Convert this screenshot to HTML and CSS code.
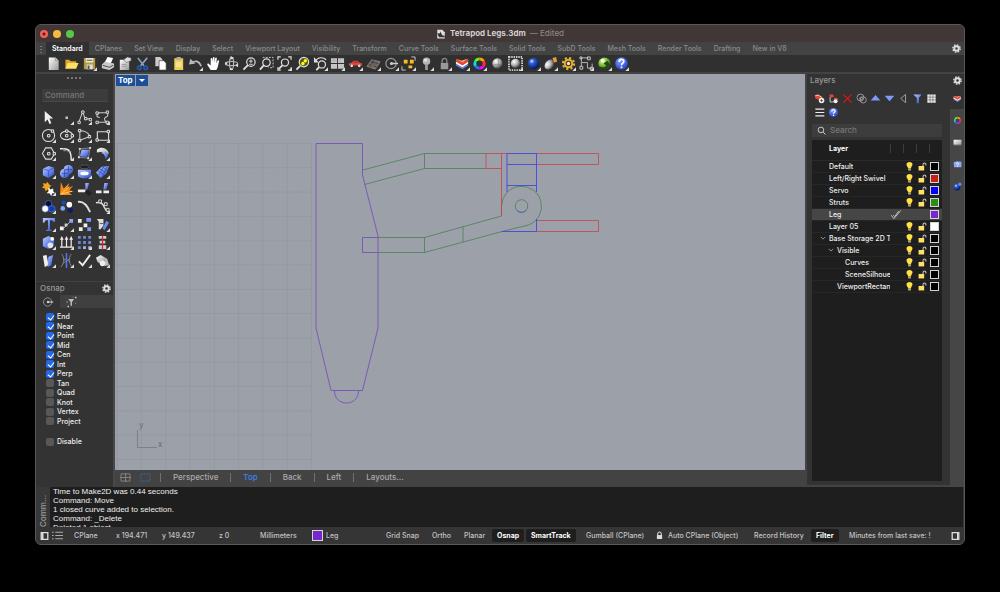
FILE: index.html
```html
<!DOCTYPE html>
<html lang="en">
<head>
<meta charset="utf-8">
<title>Tetrapod Legs.3dm</title>
<link rel="stylesheet" href="styles.css">
</head>
<body>
<svg class="sprite" aria-hidden="true">
  <defs>
    <linearGradient id="gBlue" x1="0" y1="0" x2="1" y2="1"><stop offset="0" stop-color="#c3d0ff"/><stop offset=".5" stop-color="#6d8bf0"/><stop offset="1" stop-color="#2c48b4"/></linearGradient>
    <linearGradient id="gGray" x1="0" y1="0" x2="1" y2="1"><stop offset="0" stop-color="#fff"/><stop offset="1" stop-color="#999"/></linearGradient>
    <radialGradient id="gNavy" cx=".35" cy=".3" r=".7"><stop offset="0" stop-color="#dfe9ff"/><stop offset=".3" stop-color="#2f62d8"/><stop offset="1" stop-color="#031a63"/></radialGradient>
    <radialGradient id="gPearl" cx=".35" cy=".3" r=".75"><stop offset="0" stop-color="#fff"/><stop offset=".5" stop-color="#b5b5b5"/><stop offset="1" stop-color="#333"/></radialGradient>
    <radialGradient id="gGreen" cx=".35" cy=".3" r=".75"><stop offset="0" stop-color="#d8ff9a"/><stop offset=".5" stop-color="#78bd33"/><stop offset="1" stop-color="#224d0c"/></radialGradient>
    <radialGradient id="gHelp" cx=".4" cy=".3" r=".75"><stop offset="0" stop-color="#86a3ff"/><stop offset="1" stop-color="#1f3cc0"/></radialGradient>
  </defs>
  <symbol id="more" viewBox="0 0 16 16"><path d="M16 12v4h-4z" fill="#ddd"/></symbol>
  <symbol id="new" viewBox="0 0 16 16"><path d="M3 1.500h7l3.500 3.500v10H3z" fill="url(#gGray)"/><path d="M10 1.500V5h3.500" fill="#ccc" stroke="#888" stroke-width=".7"/></symbol>
  <symbol id="open" viewBox="0 0 16 16"><path d="M1.500 13.500V4h4l1.500 1.500h6V8" fill="#e0a92c"/><path d="M1.500 13.500 4 7.500h11.500L13 13.500z" fill="#ffe067"/></symbol>
  <symbol id="save" viewBox="0 0 16 16"><path d="M2 2h12v12H2z" fill="#b39b3a"/><path d="M4 2h8v5H4z" fill="#e8e8e0"/><path d="M5 9h6.500v5H5z" fill="#ddd"/><path d="M6 10h2v4H6zM5 4h6v1H5z" fill="#555"/></symbol>
  <symbol id="print" viewBox="0 0 16 16"><path d="m5 7 3-6 6 1-2.500 6z" fill="#fff"/><path d="m2 9 3-3 10 2v4l-5 3-8-2z" fill="#c9c9c9"/><path d="m3 10 7 2 4-2" stroke="#444" fill="none"/></symbol>
  <symbol id="props" viewBox="0 0 16 16"><path d="M3 4h10v11H3z" fill="url(#gGray)"/><path d="m7 4 4-3 4 1v3l-5 2z" fill="#ddd" stroke="#555" stroke-width=".6"/><path d="M5 9h5M5 11h5" stroke="#999"/></symbol>
  <symbol id="cut" viewBox="0 0 16 16"><path d="m3 2 6.500 8.500M13 2 6 10.500" stroke="#8ba4c4" stroke-width="1.700"/><g fill="none" stroke="#2459b8" stroke-width="1.700"><circle cx="4.500" cy="12.500" r="1.900"/><circle cx="11.500" cy="12.500" r="1.900"/></g></symbol>
  <symbol id="copy" viewBox="0 0 16 16"><path d="M2.500 1h5L10 3.500V11H2.500z" fill="#ccc"/><path d="M6.500 5h5L14 7.500V15H6.500z" fill="#fff" stroke="#444" stroke-width=".7"/></symbol>
  <symbol id="paste" viewBox="0 0 16 16"><path d="M3.500 2.500h9.500V15H3.500z" fill="#eecb50"/><path d="M6 1h4.500v3H6z" fill="#aaa"/><path d="M5 6h6.500v6H5z" fill="#f8e18b"/></symbol>
  <symbol id="undo" viewBox="0 0 16 16"><path d="M4 8c3-4 8-3 10 3" fill="none" stroke="#bbb" stroke-width="1.700"/><path d="m1 9 1.500-6L8 8z" fill="#bbb"/></symbol>
  <symbol id="hand" viewBox="0 0 16 16"><path d="M5 15 1.500 9.500c-.6-1.300.9-2 1.700-1L5 10V3c0-1.300 1.700-1.300 1.800 0V7l.5-5c.2-1.300 1.800-1.200 1.800 0v5l.7-4.500c.2-1.200 1.800-1 1.700.3L11 8l1.300-3c.5-1 1.900-.5 1.600.6L12.500 12 11 15z" fill="#fff"/></symbol>
  <symbol id="rotate" viewBox="0 0 16 16"><g fill="none" stroke="#bbb" stroke-width="1.200"><ellipse cx="8" cy="8" rx="6.500" ry="2.200"/><ellipse cx="8" cy="8" rx="2.200" ry="6.500"/></g><path d="m7 0 4 2-4 2zM1 7h3l-2 3zM12 10l3-2v4zM7 12l3 3-4 0z" fill="#ddd"/></symbol>
  <symbol id="zoom" viewBox="0 0 16 16"><g fill="none" stroke="#ddd" stroke-width="1.300"><circle cx="9.500" cy="6.500" r="4.500"/><path d="M6.300 9.700 1.500 14.500" stroke-width="2"/><path d="M7.500 5.500h4M9.500 3.500v4M7.500 8.800h4" stroke-width="1"/></g></symbol>
  <symbol id="zoomwin" viewBox="0 0 16 16"><path d="M4 1.500h11v11h-5" fill="none" stroke="#ccc" stroke-dasharray="2 1.300"/><g fill="none" stroke="#ddd" stroke-width="1.300"><circle cx="8" cy="7" r="4"/><path d="m5 10-4 4.500" stroke-width="2"/></g></symbol>
  <symbol id="zoomext" viewBox="0 0 16 16"><path d="M1 4V1h3M12 1h3v3M15 12v3h-3M4 15H1v-3" fill="none" stroke="#ddd" stroke-width="1.300"/><g fill="none" stroke="#ddd" stroke-width="1.300"><circle cx="8.500" cy="7" r="3.800"/><path d="m5.700 10-4 4" stroke-width="2"/></g></symbol>
  <symbol id="zoomsel" viewBox="0 0 16 16"><circle cx="9.500" cy="6.500" r="5" fill="#5b571e" stroke="#ddd" stroke-width="1.300"/><circle cx="11" cy="5" r="1.800" fill="#ff0"/><circle cx="8.500" cy="8" r="1.800" fill="#ff0"/><path d="m5.500 10.500-4 4" stroke="#ddd" stroke-width="2"/></symbol>
  <symbol id="zoomback" viewBox="0 0 16 16"><g fill="none" stroke="#ddd" stroke-width="1.300"><circle cx="9.500" cy="9" r="3.800"/><path d="m6.500 12-3 3" stroke-width="2"/><path d="M3 5c2-4 8-4 11-1"/></g><path d="M1 1v6h5z" fill="#ddd"/></symbol>
  <symbol id="views" viewBox="0 0 16 16"><path d="M1 2.500h6.500v5H1zM8.500 2.500H15v5H8.500zM1 8.500h6.500v5H1zM8.500 8.500H15v5H8.500z" fill="#c5c5c5"/><path d="M4 3v4M1 5h6M11 3v4" stroke="#999" stroke-width=".5"/></symbol>
  <symbol id="car" viewBox="0 0 16 16"><path d="M1 8 4 7l2-2h4l2 2 3 1v2H1z" fill="#e0443a"/><path d="m6 7 1-1h2.500l1 1z" fill="#652e2e"/><circle cx="4" cy="10.500" r="1.400" fill="#ddd"/><circle cx="12" cy="10.500" r="1.400" fill="#ddd"/></symbol>
  <symbol id="cplane" viewBox="0 0 16 16"><path d="m1 11 5-7 9 2-5 8z" fill="#666" stroke="#999" stroke-width=".7"/><path d="m3 9 9 3M5 6l8 2M8 4 5 12" stroke="#333" stroke-width=".7"/><path d="m6 10 4-2" stroke="#d33" stroke-width="1.300"/><path d="m6 10 2 1" stroke="#4b4"/></symbol>
  <symbol id="osnap" viewBox="0 0 16 16"><circle cx="7.500" cy="8" r="5.500" fill="none" stroke="#999" stroke-width="1.200"/><circle cx="8" cy="8" r="1.700" fill="#ccc"/><path d="M8 8h7" stroke="#ccc" stroke-width="1.500"/></symbol>
  <symbol id="select" viewBox="0 0 16 16"><path d="M3 4h4v4H3zM9.500 4h4v4h-4zM8 10h4v3H8z" fill="#ffbd21"/><path d="M1 11v4h4M11 1h4v4" fill="none" stroke="#ccc"/></symbol>
  <symbol id="lamp" viewBox="0 0 16 16"><circle cx="8" cy="5.500" r="4" fill="#b5b5b5"/><circle cx="7" cy="4.500" r="1.500" fill="#e5e5e5"/><path d="M6.500 9h3v6h-3z" fill="#999"/></symbol>
  <symbol id="lock" viewBox="0 0 16 16"><path d="M5.500 8V5a2.500 2.500 0 0 1 5 0v3" fill="none" stroke="#888" stroke-width="1.400"/><path d="M4 7.500h8V14H4z" fill="#999"/></symbol>
  <symbol id="layers" viewBox="0 0 16 16"><path d="m1 7 7 4 6-4v3l-6 4-7-4z" fill="#567fe0"/><path d="m1 5 7 4 6-5v4l-6 4-7-4z" fill="#fff"/><path d="m1 3 6 2 7-2v3l-6 4-7-4z" fill="#e0492d"/><path d="m2 3 5 2 6-2-5 4z" fill="#ffa082"/></symbol>
  <symbol id="wheel" viewBox="0 0 16 16"><g fill="none" stroke-width="3"><path d="M8 3a5 5 0 0 1 4.300 2.500" stroke="#ff9e00"/><path d="M12.300 5.500a5 5 0 0 1 0 5" stroke="#ff3434"/><path d="M12.300 10.500A5 5 0 0 1 8 13" stroke="#f0f"/><path d="M8 13a5 5 0 0 1-4.300-2.500" stroke="#3568ff"/><path d="M3.700 10.500a5 5 0 0 1 0-5" stroke="#00dfeb"/><path d="M3.700 5.500A5 5 0 0 1 8 3" stroke="#7bea13"/></g></symbol>
  <symbol id="pearl" viewBox="0 0 16 16"><circle cx="8" cy="8" r="5.500" fill="url(#gPearl)"/><path d="M9 3v10M4 9h9" stroke="#777" stroke-width=".6"/></symbol>
  <symbol id="render" viewBox="0 0 16 16"><path d="M1 1h14v14H1z" fill="none" stroke="#ccc" stroke-width="2" stroke-dasharray="1.500 1"/><circle cx="8" cy="8" r="5" fill="url(#gPearl)"/></symbol>
  <symbol id="ball" viewBox="0 0 16 16"><circle cx="8" cy="8" r="6" fill="url(#gNavy)"/></symbol>
  <symbol id="spot" viewBox="0 0 16 16"><ellipse cx="7" cy="9" rx="6" ry="4.500" transform="rotate(-45 7 9)" fill="url(#gPearl)"/><path d="m10 2 4-1 1 5-3 1z" fill="#f09a32"/></symbol>
  <symbol id="options" viewBox="0 0 16 16"><g fill="none" stroke="#e4ad35"><circle cx="8" cy="8" r="4" stroke-width="2.200"/><circle cx="8" cy="8" r="6" stroke-width="2.200" stroke-dasharray="2.300 2.400"/></g><circle cx="8" cy="8" r="1.800" fill="#ffebae"/></symbol>
  <symbol id="dims" viewBox="0 0 16 16"><path d="M2.500 11V2H10M3 7h6v6h5V8" fill="none" stroke="#bbb"/><path d="M1 11h3v3H1zM9 1h3v3H9zM12 12h3v3h-3zM1 1h2v2H1z" fill="none" stroke="#ccc"/></symbol>
  <symbol id="hopper" viewBox="0 0 16 16"><circle cx="8" cy="8" r="6.500" fill="url(#gGreen)"/><path d="M2 11c4 2 7 1 8-1L7 8l4-3 3 4c-1 5-8 8-12 2" fill="#29451b"/><circle cx="6" cy="5" r="2" fill="#f3ffd9"/></symbol>
  <symbol id="help" viewBox="0 0 16 16"><circle cx="8" cy="8" r="6.700" fill="url(#gHelp)"/><path d="M5.500 6.500c0-4 5-3.300 5-.7 0 2-2.500 1.700-2.500 4M8 11.200v1.800" fill="none" stroke="#fff" stroke-width="1.800"/></symbol>
  <symbol id="gear" viewBox="0 0 16 16"><circle cx="8" cy="8" r="4" fill="none" stroke="#ddd" stroke-width="3.400"/><circle cx="8" cy="8" r="6.500" fill="none" stroke="#ddd" stroke-width="2.600" stroke-dasharray="2.700 2.400"/></symbol>
  <symbol id="arrow" viewBox="0 0 16 16"><path d="M4 1v12l3-3 2 5 2-1-2-5h4z" fill="#eee"/></symbol>
  <symbol id="point" viewBox="0 0 16 16"><path d="M7 7h2.500v2.500H7z" fill="#ccc"/></symbol>
  <symbol id="pline" viewBox="0 0 16 16"><path d="m2 13 4-11 3 8 5-1" fill="none" stroke="#ccc" stroke-width="1.100"/><g fill="#333" stroke="#ddd"><path d="M1 12h2.500v2.500H1zM5 1h2.500v2.500H5zM8 8h2.500v2.500H8zM13 9h2.500v2.500H13z"/></g></symbol>
  <symbol id="curve" viewBox="0 0 16 16"><path d="M3 3h10c2 3 0 4-2 5s0 5 2 5H3M5 3c-4 2-4 5 0 5" fill="none" stroke="#ccc" stroke-width="1.100"/><g fill="#333" stroke="#ddd"><path d="M1 2h2.500v2.500H1zM12 1h2.500v2.500H12zM1 12h2.500v2.500H1zM12 12h2.500v2.500H12z"/></g></symbol>
  <symbol id="circle" viewBox="0 0 16 16"><circle cx="8" cy="8" r="6.500" fill="none" stroke="#ddd" stroke-width="1.100"/><path d="M7 7h2.500v2.500H7zM11 2h2.500v2.500H11z" fill="#333" stroke="#eee"/></symbol>
  <symbol id="ellipse" viewBox="0 0 16 16"><ellipse cx="8" cy="8" rx="6.500" ry="4.500" fill="none" stroke="#ddd" stroke-width="1.100"/><path d="M7 7h2.500v2.500H7zM7 2h2.500v2.500H7zM13 7h2.500v2.500H13z" fill="#333" stroke="#eee"/></symbol>
  <symbol id="arc" viewBox="0 0 16 16"><path d="M3 13V3c5 0 9 2 11 6L3 13" fill="none" stroke="#ccc" stroke-width="1.100"/><path d="M1.500 1.500H4V4H1.500zM1.500 12H4v2.500H1.500zM12 8h2.500v2.500H12z" fill="#333" stroke="#eee"/></symbol>
  <symbol id="rect" viewBox="0 0 16 16"><path d="M2.500 4h12v9h-12z" fill="none" stroke="#ddd" stroke-width="1.200"/><path d="M1 11.500h2.500V14H1zM13 2.500h2.500V5H13z" fill="#333" stroke="#eee"/></symbol>
  <symbol id="poly" viewBox="0 0 16 16"><path d="M5 2h6l3.500 6-3.500 6H5L1.500 8z" fill="none" stroke="#ddd" stroke-width="1.100"/><path d="M7 7h2.500v2.500H7zM13 7h2.500v2.500H13z" fill="#333" stroke="#eee"/></symbol>
  <symbol id="fillet" viewBox="0 0 16 16"><path d="M1 3h4c6 0 8 3 8 12" fill="none" stroke="#eee" stroke-width="1.500"/><path d="M5 2v3h3M9 6h4" fill="none" stroke="#999"/></symbol>
  <symbol id="patch" viewBox="0 0 16 16"><path d="m5 4 8 0-2 8-8-1z" fill="url(#gBlue)"/><path d="m3 3 11-1-2 11-10-1z" fill="none" stroke="#aaa" stroke-width=".7"/><path d="M2 2h2v2H2zM13 1h2v2h-2zM11 12h2v2h-2zM1 11h2v2H1z" fill="#ddd"/></symbol>
  <symbol id="loft" viewBox="0 0 16 16"><path d="M2 4c5-4 11-2 13 4l-5 2C9 6 6 6 2 7z" fill="url(#gGray)"/><path d="M7 8c3 0 4 2 4 6l3-3c0-4-2-5-4-5z" fill="url(#gBlue)"/></symbol>
  <symbol id="box" viewBox="0 0 16 16"><path d="m2 5 6-3 6 2v7l-6 4-6-3z" fill="url(#gBlue)"/><path d="m2 5 6 2 6-3M8 7v8" fill="none" stroke="#3c53b7" stroke-width=".8"/></symbol>
  <symbol id="spheres" viewBox="0 0 16 16"><circle cx="10" cy="6" r="5" fill="url(#gBlue)"/><circle cx="6" cy="10" r="5" fill="url(#gBlue)"/><path d="M3 10h7M6 6v8M10 2v7M6 6h8" stroke="#263c91" stroke-width=".7"/></symbol>
  <symbol id="tube" viewBox="0 0 16 16"><ellipse cx="8" cy="3" rx="5" ry="2" fill="#1d1d1d" stroke="#555"/><path d="M1 6h14v7c-3 3-11 3-14 0z" fill="url(#gBlue)"/><ellipse cx="8" cy="10" rx="4.500" ry="2" fill="#fff"/></symbol>
  <symbol id="mesh" viewBox="0 0 16 16"><path d="m1 9 6-6 8-1-3 8-6 5z" fill="url(#gBlue)"/><path d="m3 7 6 4M5 5l6 4M8 3l5 4M4 12l5-9M8 13l5-10" stroke="#314bae" stroke-width=".8"/></symbol>
  <symbol id="puzzle" viewBox="0 0 16 16"><path d="m2 2 3 1 2-2 2 3 2 1-2 2 1 3-3-1-2 2-1-3-3-1 2-2z" fill="#f4a11e"/><path d="m8 7 2 2 3-1 0 3 2 2-3 0-1 3-2-3-3 0 2-2z" fill="#fff"/></symbol>
  <symbol id="explode" viewBox="0 0 16 16"><path d="M1 15 2 1l3 7 6-6-2 6 6-3-4 5 5 1-6 1 4 3z" fill="#f58a18"/><path d="m2 14 9-8M2 14l12-3" stroke="#ffd35c"/></symbol>
  <symbol id="trim" viewBox="0 0 16 16"><path d="M9 2h4l-2 7H9z" fill="url(#gBlue)"/><path d="M1 9h8v3H1z" fill="#eee"/><path d="m8 12 4-3 4 4-3 3z" fill="#222"/></symbol>
  <symbol id="split" viewBox="0 0 16 16"><path d="M10 2h4l-2 7H9z" fill="url(#gBlue)"/><path d="M1 10h6v3H1zM9 10h6v3H9z" fill="#eee"/></symbol>
  <symbol id="union" viewBox="0 0 16 16"><g stroke="#5878e0" stroke-width=".7"><circle cx="8" cy="5" r="3.500" fill="#061035"/><circle cx="4.500" cy="10.500" r="3.500" fill="#fff"/><circle cx="11.500" cy="10.500" r="3.500" fill="#123cab"/></g></symbol>
  <symbol id="dots" viewBox="0 0 16 16"><circle cx="5" cy="4" r="2.300" fill="#1b48b5"/><circle cx="11" cy="6" r="3" fill="#fff"/><circle cx="4" cy="10" r="2.500" fill="#86a5ff"/><circle cx="12" cy="12" r="2.800" fill="#101c65"/></symbol>
  <symbol id="blend" viewBox="0 0 16 16"><path d="M1 3c6-1 10 4 13 11" fill="none" stroke="#ddd" stroke-width="2"/></symbol>
  <symbol id="match" viewBox="0 0 16 16"><path d="M1 4c6-1 8 2 9 5s3 4 5 5" fill="none" stroke="#ddd" stroke-width="1.600"/><path d="M4 1h3v3H4zM10 4h3v3h-3zM12 10h3v3h-3z" fill="#333" stroke="#ddd"/></symbol>
  <symbol id="text" viewBox="0 0 16 16"><path d="M2 1h13v4h-2l-1-1.500H9.500V13l2 1v1h-6v-1l2-1V3.500H5L3.500 6H2z" fill="url(#gBlue)"/></symbol>
  <symbol id="move" viewBox="0 0 16 16"><path d="m4 13 8-8" stroke="#bbb"/><path d="M1 10h4v4H1z" fill="#eee"/><path d="M6 7h3v3H6z" fill="#ccc"/><path d="M11 2h4v4h-4z" fill="#88a5fa"/></symbol>
  <symbol id="copies" viewBox="0 0 16 16"><path d="M1 2h4v4H1zM7 7h4v4H7zM2 11h4v4H2z" fill="#eee"/><path d="M10 1h5v4h-5zM11 11h4v4h-4z" fill="#7898f4"/></symbol>
  <symbol id="scale" viewBox="0 0 16 16"><path d="M2 2h7v7l-3 4H4V5z" fill="#ddd"/><path d="m8 12 4-8 3 2-5 8z" fill="#6988f0"/><path d="M5 7h4" stroke="#555"/></symbol>
  <symbol id="cage" viewBox="0 0 16 16"><path d="m2 4 6-3 6 3v8l-6 3-6-3z" fill="url(#gBlue)"/><circle cx="12" cy="4" r="2" fill="#fff"/><circle cx="10" cy="11" r="3" fill="#e5e5e5"/></symbol>
  <symbol id="extrude" viewBox="0 0 16 16"><path d="M1 13h14M3 13V4M8 13V4M13 13V4" stroke="#eee" stroke-width="1.300"/><path d="m1 5 2-4 2 4zM6 5l2-4 2 4zM11 5l2-4 2 4z" fill="#eee"/></symbol>
  <symbol id="array" viewBox="0 0 16 16"><path d="M1 1h3v3H1zM6.500 1h3v3h-3zM12 1h3v3h-3zM1 6.500h3v3H1zM6.500 6.500h3v3h-3zM12 6.500h3v3h-3zM1 12h3v3H1z" fill="#6b86d8"/><path d="M6.500 12h3v3h-3zM12 12h3v3h-3z" fill="#aab8e8"/></symbol>
  <symbol id="align" viewBox="0 0 16 16"><path d="M4 1h8v3H4zM5 6h6v3H5zM4 11h8v4H4z" fill="#ccc"/><path d="M8 0v16" stroke="#d92323" stroke-width="1.300"/></symbol>
  <symbol id="plates" viewBox="0 0 16 16"><path d="m2 3 4-1 2 11-4 2z" fill="#eee"/><path d="m8 4 5-2-2 11-4 2z" fill="url(#gBlue)"/></symbol>
  <symbol id="section" viewBox="0 0 16 16"><path d="M3 1c3 5 3 9-1 14M13 1c-3 5-3 9 1 14M4 6l8 3M4 11l8-5" fill="none" stroke="#888"/><path d="M8 0v16" stroke="#4b77ff" stroke-width="1.600"/></symbol>
  <symbol id="check" viewBox="0 0 16 16"><path d="m2 9 4 4 8-11" fill="none" stroke="#eee" stroke-width="2"/></symbol>
  <symbol id="solids" viewBox="0 0 16 16"><path d="m1 5 5-3 5 3-2 6-6-1z" fill="url(#gGray)"/><path d="m10 5 3 1 2 7-5 1z" fill="#bbb"/><circle cx="8" cy="11" r="3" fill="#eee"/></symbol>
  <symbol id="newlayer" viewBox="0 0 16 16"><path d="m1 3 5-1 7 4-3 5-8-3z" fill="#e0492d"/><path d="m2 4 4-1 5 3" stroke="#fff" fill="none"/><circle cx="11" cy="11" r="4" fill="#eee"/><path d="M9 11h4M11 9v4" stroke="#333"/></symbol>
  <symbol id="sublayer" viewBox="0 0 16 16"><path d="M2 2h5l2 3-6 2zM9 7h4l2 3H9z" fill="#e0492d"/><path d="M3 6v7h5" fill="none" stroke="#fff"/><circle cx="11" cy="12" r="3" fill="#eee"/></symbol>
  <symbol id="delete" viewBox="0 0 16 16"><path d="m2 2 12 12M14 2 2 14" stroke="#dd1710" stroke-width="2"/></symbol>
  <symbol id="spiral" viewBox="0 0 16 16"><g fill="none" stroke="#aaa" stroke-width="1.200"><circle cx="6.500" cy="6.500" r="5"/><circle cx="10.500" cy="10" r="4.500"/><circle cx="7.500" cy="8" r="2"/></g></symbol>
  <symbol id="up" viewBox="0 0 16 16"><path d="m8 3 7 8H1z" fill="#7c9aff"/></symbol>
  <symbol id="down" viewBox="0 0 16 16"><path d="m8 12 7-8H1z" fill="#7c9aff"/></symbol>
  <symbol id="left" viewBox="0 0 16 16"><path d="M11 2v12L4 8z" fill="none" stroke="#aaa" stroke-width="1.300"/></symbol>
  <symbol id="filter" viewBox="0 0 16 16"><path d="M2 2h12l-4 5v8H7V7z" fill="url(#gBlue)"/></symbol>
  <symbol id="grid" viewBox="0 0 16 16"><path d="M2 2h12v12H2z" fill="#eee"/><path d="M6 2v12M10 2v12M2 6h12M2 10h12" stroke="#666"/></symbol>
  <symbol id="menu" viewBox="0 0 16 16"><path d="M2 3h13M2 8h13M2 13h13" stroke="#eee" stroke-width="1.700"/></symbol>
  <symbol id="magnify" viewBox="0 0 16 16"><circle cx="7" cy="7" r="5" fill="none" stroke="#ddd" stroke-width="1.500"/><path d="m11 11 4 4" stroke="#ddd" stroke-width="1.700"/></symbol>
  <symbol id="monitor" viewBox="0 0 16 16"><path d="M1 3h14v9H1z" fill="url(#gGray)"/><path d="M2 13h12" stroke="#777"/></symbol>
  <symbol id="book" viewBox="0 0 16 16"><path d="m1 4 6-2 8 1v10H2z" fill="#8ea7f5"/><path d="M6 7c0-3 4-2 4 0 0 1-2 1-2 3M8 11v1.500" fill="none" stroke="#fff" stroke-width="1.500"/></symbol>
  <symbol id="world" viewBox="0 0 16 16"><circle cx="7" cy="9" r="6" fill="url(#gNavy)"/><circle cx="12" cy="4" r="3" fill="#6188e5"/></symbol>
  <symbol id="bulb" viewBox="0 0 16 16"><path d="M8 0c7 0 6 7 3 9v2H5V9C2 7 1 0 8 0" fill="#ffe045"/><path d="M5.500 11h5v4h-5z" fill="#bbb06d"/></symbol>
  <symbol id="unlock" viewBox="0 0 16 16"><path d="M1 7h10v8H1z" fill="#ffe164"/><path d="M9 8V4c0-3 5-3 5 0v2" fill="none" stroke="#ccc" stroke-width="1.800"/></symbol>
  <symbol id="dbl" viewBox="0 0 16 16"><path d="m1 9 4 5L15 2M4 9l2 2 6-8" fill="none" stroke="#ccc" stroke-width="1.300"/></symbol>
  <symbol id="chev" viewBox="0 0 16 16"><path d="m2 5 6 6 6-6" fill="none" stroke="#999" stroke-width="2.500"/></symbol>
  <symbol id="doc" viewBox="0 0 16 16"><path d="M2 1h8l4 4v10H2z" fill="#ddd"/><path d="M2 7c3 1 5 0 5-3l3 6 4 1v2H5z" fill="#333"/></symbol>
  <symbol id="snaps" viewBox="0 0 16 16"><path d="M3 4h8L8 8v5H6V8z" fill="#bbb"/><path d="M12 1h2v2h-2zM1 7h1v2H1zM12 9h1v1h-1zM2 13h2v2H2zM9 1h1v1H9z" fill="#ccc"/></symbol>
</svg>

<main class="window">
  <header class="titlebar">
    <div class="lights"><button class="light close" aria-label="Close"></button><button class="light mini" aria-label="Minimize"></button><button class="light full" aria-label="Full screen"></button></div>
    <svg class="doc-icon"><use href="#doc"/></svg>
    <h1>Tetrapod Legs.3dm</h1><span class="edited">— Edited</span>
  </header>

  <nav class="tabs" aria-label="Toolbars">
    <span class="side-grip"></span>
    <button class="tab active">Standard</button><button class="tab">CPlanes</button><button class="tab">Set View</button><button class="tab">Display</button><button class="tab">Select</button><button class="tab">Viewport Layout</button><button class="tab">Visibility</button><button class="tab">Transform</button><button class="tab">Curve Tools</button><button class="tab">Surface Tools</button><button class="tab">Solid Tools</button><button class="tab">SubD Tools</button><button class="tab">Mesh Tools</button><button class="tab">Render Tools</button><button class="tab">Drafting</button><button class="tab">New in V8</button>
    <button class="gear" aria-label="Toolbar options"><svg><use href="#gear"/></svg></button>
  </nav>

  <div class="toolbar">
    <button aria-label="New"><svg><use href="#new"/></svg></button>
    <button aria-label="Open"><svg><use href="#open"/></svg></button>
    <button aria-label="Save"><svg><use href="#save"/><use href="#more"/></svg></button>
    <button aria-label="Print"><svg><use href="#print"/></svg></button>
    <button aria-label="Properties"><svg><use href="#props"/></svg></button>
    <button aria-label="Cut"><svg><use href="#cut"/></svg></button>
    <button aria-label="Copy"><svg><use href="#copy"/></svg></button>
    <button aria-label="Paste"><svg><use href="#paste"/></svg></button>
    <button aria-label="Undo"><svg><use href="#undo"/><use href="#more"/></svg></button>
    <button aria-label="Pan"><svg><use href="#hand"/></svg></button>
    <button aria-label="Rotate view"><svg><use href="#rotate"/></svg></button>
    <button aria-label="Zoom dynamic"><svg><use href="#zoom"/></svg></button>
    <button aria-label="Zoom window"><svg><use href="#zoomwin"/></svg></button>
    <button aria-label="Zoom extents"><svg><use href="#zoomext"/><use href="#more"/></svg></button>
    <button aria-label="Zoom selected"><svg><use href="#zoomsel"/></svg></button>
    <button aria-label="Undo view"><svg><use href="#zoomback"/><use href="#more"/></svg></button>
    <button aria-label="Viewports"><svg><use href="#views"/><use href="#more"/></svg></button>
    <button aria-label="Right view"><svg><use href="#car"/><use href="#more"/></svg></button>
    <button aria-label="Construction plane"><svg><use href="#cplane"/><use href="#more"/></svg></button>
    <button aria-label="Object snap"><svg><use href="#osnap"/><use href="#more"/></svg></button>
    <button aria-label="Select"><svg><use href="#select"/><use href="#more"/></svg></button>
    <button aria-label="Hide"><svg><use href="#lamp"/><use href="#more"/></svg></button>
    <button aria-label="Lock"><svg><use href="#lock"/><use href="#more"/></svg></button>
    <button aria-label="Layers"><svg><use href="#layers"/><use href="#more"/></svg></button>
    <button aria-label="Color"><svg><use href="#wheel"/><use href="#more"/></svg></button>
    <button aria-label="Shade"><svg><use href="#pearl"/></svg></button>
    <button aria-label="Render preview"><svg><use href="#render"/><use href="#more"/></svg></button>
    <button aria-label="Render"><svg><use href="#ball"/><use href="#more"/></svg></button>
    <button aria-label="Spotlight"><svg><use href="#spot"/><use href="#more"/></svg></button>
    <button aria-label="Options"><svg><use href="#options"/><use href="#more"/></svg></button>
    <button aria-label="Dimension"><svg><use href="#dims"/><use href="#more"/></svg></button>
    <button aria-label="Grasshopper"><svg><use href="#hopper"/><use href="#more"/></svg></button>
    <button aria-label="Help"><svg><use href="#help"/><use href="#more"/></svg></button>
  </div>

  <section class="workspace">
    <aside class="left">
      <div class="grip"></div>
      <input class="command" type="text" placeholder="Command" aria-label="Command">
      <div class="tools">
        <button aria-label="Pointer"><svg><use href="#arrow"/></svg></button>
        <button aria-label="Point"><svg><use href="#point"/><use href="#more"/></svg></button>
        <button aria-label="Polyline"><svg><use href="#pline"/><use href="#more"/></svg></button>
        <button aria-label="Curve"><svg><use href="#curve"/><use href="#more"/></svg></button>
        <button aria-label="Circle"><svg><use href="#circle"/><use href="#more"/></svg></button>
        <button aria-label="Ellipse"><svg><use href="#ellipse"/><use href="#more"/></svg></button>
        <button aria-label="Arc"><svg><use href="#arc"/><use href="#more"/></svg></button>
        <button aria-label="Rectangle"><svg><use href="#rect"/><use href="#more"/></svg></button>
        <button aria-label="Polygon"><svg><use href="#poly"/><use href="#more"/></svg></button>
        <button aria-label="Fillet"><svg><use href="#fillet"/><use href="#more"/></svg></button>
        <button aria-label="Surface"><svg><use href="#patch"/><use href="#more"/></svg></button>
        <button aria-label="Fillet surface"><svg><use href="#loft"/><use href="#more"/></svg></button>
        <button aria-label="Box"><svg><use href="#box"/><use href="#more"/></svg></button>
        <button aria-label="SubD"><svg><use href="#spheres"/><use href="#more"/></svg></button>
        <button aria-label="Extract"><svg><use href="#tube"/><use href="#more"/></svg></button>
        <button aria-label="Mesh"><svg><use href="#mesh"/><use href="#more"/></svg></button>
        <button aria-label="Join"><svg><use href="#puzzle"/><use href="#more"/></svg></button>
        <button aria-label="Explode"><svg><use href="#explode"/></svg></button>
        <button aria-label="Trim"><svg><use href="#trim"/></svg></button>
        <button aria-label="Split"><svg><use href="#split"/></svg></button>
        <button aria-label="Group"><svg><use href="#union"/><use href="#more"/></svg></button>
        <button aria-label="Ungroup"><svg><use href="#dots"/></svg></button>
        <button aria-label="Edit points"><svg><use href="#blend"/></svg></button>
        <button aria-label="Control points"><svg><use href="#match"/><use href="#more"/></svg></button>
        <button aria-label="Text"><svg><use href="#text"/><use href="#more"/></svg></button>
        <button aria-label="Move"><svg><use href="#move"/><use href="#more"/></svg></button>
        <button aria-label="Copy objects"><svg><use href="#copies"/></svg></button>
        <button aria-label="Rotate"><svg><use href="#scale"/><use href="#more"/></svg></button>
        <button aria-label="Cage"><svg><use href="#cage"/><use href="#more"/></svg></button>
        <button aria-label="Extrude"><svg><use href="#extrude"/><use href="#more"/></svg></button>
        <button aria-label="Array"><svg><use href="#array"/><use href="#more"/></svg></button>
        <button aria-label="Align"><svg><use href="#align"/><use href="#more"/></svg></button>
        <button aria-label="Flow"><svg><use href="#plates"/><use href="#more"/></svg></button>
        <button aria-label="Section"><svg><use href="#section"/><use href="#more"/></svg></button>
        <button aria-label="Check"><svg><use href="#check"/><use href="#more"/></svg></button>
        <button aria-label="Solids"><svg><use href="#solids"/><use href="#more"/></svg></button>
      </div>
      <div class="osnap-head"><h2>Osnap</h2><button class="gear" aria-label="Osnap options"><svg><use href="#gear"/></svg></button></div>
      <div class="osnap-tabs"><button aria-label="Object snaps"><svg><use href="#osnap"/></svg></button><button class="filter-tab" aria-label="Selection filter"><svg><use href="#snaps"/></svg></button></div>
      <div class="snaps">
        <label><input type="checkbox" checked>End</label>
        <label><input type="checkbox" checked>Near</label>
        <label><input type="checkbox" checked>Point</label>
        <label><input type="checkbox" checked>Mid</label>
        <label><input type="checkbox" checked>Cen</label>
        <label><input type="checkbox" checked>Int</label>
        <label><input type="checkbox" checked>Perp</label>
        <label><input type="checkbox">Tan</label>
        <label><input type="checkbox">Quad</label>
        <label><input type="checkbox">Knot</label>
        <label><input type="checkbox">Vertex</label>
        <label><input type="checkbox">Project</label>
      </div>
      <div class="disable"><label><input type="checkbox">Disable</label></div>
    </aside>

    <section class="center">
      <div class="viewport">
        <svg class="drawing" role="img" aria-label="Top view of leg assembly">
          <defs>
            <pattern id="minor" width="4.860" height="4.860" patternUnits="userSpaceOnUse" x="311" y="143"><path d="M0 0H4.860M0 0V4.860" stroke="#949aa2" stroke-width=".3" fill="none"/></pattern>
            <pattern id="major" width="24.300" height="24.300" patternUnits="userSpaceOnUse" x="311" y="143"><path d="M0 .5H24.300M.5 0V24.300" stroke="#91979f" stroke-width=".7" fill="none"/></pattern>
          </defs>
          <g transform="translate(-115 -74)" fill="none">
            <path d="M115 143h197v400H115z" fill="url(#minor)"/>
            <path d="M115 143h197v400H115z" fill="url(#major)"/>
            <g stroke="#4b7d58" stroke-width=".8">
              <path d="M363 170 424.500 153.500H486M364.500 184.500l60-16H486M424.500 153.500v15"/>
              <path d="M378 237.500h46.500l77-21.500v-10a20 20 0 1 1 27 19l-26.500 6.500-77.500 21H378M424.500 237.500v15M463 227v15"/>
              <circle cx="521.500" cy="206" r="6.300"/>
            </g>
            <g stroke="#c8424a" stroke-width=".8">
              <path d="M486 153.500h21M486 153.500v15h15.500M501.500 153.500V216M536.500 153.500h62v11h-62M536.500 220.500h62v11h-62"/>
            </g>
            <g stroke="#3b3be6" stroke-width=".8">
              <path d="M507 192v-38.500h29.500V192M507 164.500h29.500M507 185.500h29.500M536.500 219v12.500H502"/>
              <path d="M516.500 210a6.300 6.300 0 0 0 10 0" stroke-width=".5"/>
            </g>
            <g stroke="#7148bd" stroke-width=".8">
              <path d="M316 143.500h46.500V175L378 236v92l-15.500 62.500H331L316 328z"/>
              <path d="M378 237.500h-15.500v15H378M334.500 391c0 16 24 16 24 0"/>
            </g>
            <path d="M137.500 430v17.500H157" stroke="#737980" stroke-width=".8"/>
            <text x="139" y="428" class="axis">y</text><text x="158" y="447" class="axis">x</text>
          </g>
        </svg>
        <div class="view-label"><button>Top</button><button aria-label="Viewport menu"><span class="caret"></span></button></div>
      </div>
      <nav class="view-tabs" aria-label="Views">
        <button class="layout" aria-label="Four views"><svg viewBox="0 0 12 10"><path d="M1 1h10v8H1zM6 0v10M0 5h12" fill="none" stroke="#888"/></svg></button>
        <button class="layout" aria-label="Single view"><svg viewBox="0 0 12 10"><path d="M1 1h10v8H1z" fill="none" stroke="#3a68bd" stroke-dasharray="2 1"/></svg></button>
        <i></i><button>Perspective</button><i></i><button class="current">Top</button><i></i><button>Back</button><i></i><button>Left</button><i></i><button>Layouts...</button>
      </nav>
    </section>

    <aside class="right">
      <div class="layers-panel">
        <h2>Layers</h2>
        <div class="layer-tools">
          <button aria-label="New layer"><svg><use href="#newlayer"/></svg></button>
          <button aria-label="New sublayer"><svg><use href="#sublayer"/></svg></button>
          <button aria-label="Delete"><svg><use href="#delete"/></svg></button>
          <button aria-label="Duplicate"><svg><use href="#spiral"/></svg></button>
          <button aria-label="Move up"><svg><use href="#up"/></svg></button>
          <button aria-label="Move down"><svg><use href="#down"/></svg></button>
          <button aria-label="Move out"><svg><use href="#left"/></svg></button>
          <button aria-label="Filter layers"><svg><use href="#filter"/></svg></button>
          <button aria-label="Columns"><svg><use href="#grid"/></svg></button>
          <button aria-label="Menu"><svg><use href="#menu"/></svg></button>
          <button aria-label="Layer help"><svg><use href="#help"/></svg></button>
        </div>
        <label class="search"><svg><use href="#magnify"/></svg><input type="text" placeholder="Search" aria-label="Search layers"></label>
        <div class="list">
          <table>
            <colgroup><col><col class="c"><col class="c"><col class="c"><col class="c"></colgroup>
            <thead><tr><th scope="col">Layer</th><th><i></i></th><th><i></i></th><th><i></i></th><th><i></i></th></tr></thead>
            <tbody>
              <tr><td>Default</td><td></td><td><svg><use href="#bulb"/></svg></td><td><svg><use href="#unlock"/></svg></td><td><span class="swatch"></span></td></tr>
              <tr><td>Left/Right Swivel</td><td></td><td><svg><use href="#bulb"/></svg></td><td><svg><use href="#unlock"/></svg></td><td><span class="swatch red"></span></td></tr>
              <tr><td>Servo</td><td></td><td><svg><use href="#bulb"/></svg></td><td><svg><use href="#unlock"/></svg></td><td><span class="swatch blue"></span></td></tr>
              <tr><td>Struts</td><td></td><td><svg><use href="#bulb"/></svg></td><td><svg><use href="#unlock"/></svg></td><td><span class="swatch green"></span></td></tr>
              <tr class="selected"><td>Leg</td><td><svg class="tick"><use href="#dbl"/></svg></td><td></td><td></td><td><span class="swatch purple"></span></td></tr>
              <tr><td>Layer 05</td><td></td><td><svg><use href="#bulb"/></svg></td><td><svg><use href="#unlock"/></svg></td><td><span class="swatch white"></span></td></tr>
              <tr><td class="parent"><svg><use href="#chev"/></svg>Base Storage 2D T</td><td></td><td><svg><use href="#bulb"/></svg></td><td><svg><use href="#unlock"/></svg></td><td><span class="swatch"></span></td></tr>
              <tr><td class="parent level1"><svg><use href="#chev"/></svg>Visible</td><td></td><td><svg><use href="#bulb"/></svg></td><td><svg><use href="#unlock"/></svg></td><td><span class="swatch"></span></td></tr>
              <tr><td class="level2">Curves</td><td></td><td><svg><use href="#bulb"/></svg></td><td><svg><use href="#unlock"/></svg></td><td><span class="swatch"></span></td></tr>
              <tr><td class="level2">SceneSilhoue</td><td></td><td><svg><use href="#bulb"/></svg></td><td><svg><use href="#unlock"/></svg></td><td><span class="swatch"></span></td></tr>
              <tr><td class="level1">ViewportRectan</td><td></td><td><svg><use href="#bulb"/></svg></td><td><svg><use href="#unlock"/></svg></td><td><span class="swatch"></span></td></tr>
            </tbody>
          </table>
        </div>
      </div>
      <div class="side">
        <button class="gear" aria-label="Panel options"><svg><use href="#gear"/></svg></button>
        <button class="side-active" aria-label="Layers panel"><svg><use href="#layers"/></svg></button>
        <div class="side-rest">
          <button aria-label="Properties panel"><svg><use href="#wheel"/></svg></button>
          <button aria-label="Display panel"><svg><use href="#monitor"/></svg></button>
          <button aria-label="Help panel"><svg><use href="#book"/></svg></button>
          <button aria-label="Rendering panel"><svg><use href="#world"/></svg></button>
        </div>
      </div>
    </aside>
  </section>

  <section class="console">
    <span class="console-tab">Comm...</span>
    <div class="log"><p>Time to Make2D was 0.44 seconds</p><p>Command: Move</p><p>1 closed curve added to selection.</p><p>Command: _Delete</p><p>Deleted 1 object.</p></div>
  </section>

  <footer class="status">
    <button class="pane" aria-label="Toggle left panel"><svg viewBox="0 0 8 8"><path d="M.7.7h6.600v6.600H.7z" fill="none" stroke="#ddd" stroke-width="1.300"/><path d="M1 1h2v6H1z" fill="#ddd"/></svg></button>
    <button class="pane list-toggle" aria-label="List"><svg viewBox="0 0 10 8"><path d="M3 1h7M3 4h7M3 7h7M0 1h1.500M0 4h1.500M0 7h1.500" stroke="#aaa"/></svg></button>
    <span>CPlane</span><span>x 194.471</span><span>y 149.437</span><span>z 0</span><span>Millimeters</span>
    <span class="current-layer"><span class="swatch purple large"></span>Leg</span>
    <button>Grid Snap</button><button>Ortho</button><button>Planar</button><button class="on">Osnap</button><button class="on">SmartTrack</button><button>Gumball (CPlane)</button>
    <button class="auto"><svg viewBox="0 0 8 10"><path d="M2 5V3a2 2 0 0 1 4 0v2" fill="none" stroke="#ddd" stroke-width="1.200"/><path d="M1 4.500h6V9H1z" fill="#ddd"/></svg>Auto CPlane (Object)</button>
    <button>Record History</button><button class="on">Filter</button><span class="save-time">Minutes from last save: !</span>
    <button class="pane" aria-label="Toggle right panel"><svg viewBox="0 0 8 8"><path d="M.7.7h6.600v6.600H.7z" fill="none" stroke="#ddd" stroke-width="1.300"/><path d="M5.500 1H7v6H5.500z" fill="#ddd"/></svg></button>
  </footer>
</main>
</body>
</html>
```
FILE: styles.css
```css
* { box-sizing: border-box; }
body {
  margin: 0;
  min-height: 100vh;
  padding: 24px 35px 47px 35px;
  display: flex;
  background: #000;
  color: #ddd;
  font: 500 7px/9px Inter, "Liberation Sans", sans-serif;
}
button, input { font: inherit; color: inherit; margin: 0; padding: 0; border: 0; background: none; }
h1, h2, p { margin: 0; }
svg { display: block; flex: none; }
.sprite { position: absolute; width: 0; height: 0; }
.window {
  flex: 1;
  min-width: 0;
  display: flex;
  flex-direction: column;
  border: 1px solid #5b5858;
  border-radius: 6px;
  overflow: hidden;
  background: #434343;
}

.titlebar {
  height: 17px;
  display: flex;
  align-items: center;
  justify-content: center;
  gap: 4px;
  position: relative;
  background: #403736;
  font-size: 8px;
}
.titlebar h1 { font-size: 8px; font-weight: 700; color: #d5d0cf; }
.edited { color: #8b8483; }
.doc-icon { width: 10px; height: 10px; }
.lights { position: absolute; left: 4px; display: flex; gap: 5px; }
.light { width: 8px; height: 8px; border-radius: 50%; }
.close { background: radial-gradient(circle, #7b1712 1px, #f5605a 2px); }
.mini { background: #f5bd40; }
.full { background: #56c845; }

.tabs { height: 13px; display: flex; padding-left: 4px; background: #434343; }
.side-grip { width: 2px; height: 9px; margin: 4px 4px 0 0; background: repeating-linear-gradient(#777 0 1px, transparent 1px 3px); }
.tab { padding: 0 6px; color: #8a8a8a; white-space: nowrap; }
.tab.active { background: #303030; color: #fff; font-weight: 600; }
.gear svg { width: 9px; height: 9px; }
.tabs .gear { margin-left: auto; padding-right: 3px; }

.toolbar {
  height: 17px;
  padding-left: 9px;
  display: grid;
  grid-template-columns: repeat(33, minmax(0, 585fr)) minmax(0, 10989fr);
  align-items: center;
  justify-items: center;
  background: #303030;
}
.toolbar svg, .tools svg { width: 15px; height: 15px; }

.workspace { flex: 1; display: flex; min-height: 0; border-top: 2px solid #434343; }
.left { width: 79px; border-right: 2px solid #484848; background: #333; display: flex; flex-direction: column; }
.grip { width: 15px; height: 2px; margin: 3px auto 0; background: repeating-linear-gradient(90deg, #777 0 2px, transparent 2px 4px); }
.command { height: 13px; margin: 10px 5px 0 6px; padding: 0 3px; width: auto; font-size: 8px; background: #3c3c3c; border-bottom: 1px solid #484848; }
input::placeholder { color: #777; opacity: 1; }
.tools {
  height: 160px;
  margin: 7px 2px 0 4px;
  display: grid;
  grid-template: repeat(9, 1fr) / repeat(4, 1fr);
  align-items: center;
  justify-items: center;
}
.osnap-head { margin-top: 12px; height: 14px; padding: 0 2px 0 4px; border-top: 1px solid #404040; display: flex; align-items: center; justify-content: space-between; }
h2 { font-size: 8px; font-weight: 500; color: #999; }
.osnap-tabs { height: 13px; display: grid; grid-template-columns: 24px 1fr; }
.osnap-tabs button { padding-left: 6px; }
.filter-tab { background: #404040; }
.osnap-tabs svg { width: 12px; height: 12px; }
.snaps { height: 114px; margin: 4px 0 0 10px; display: grid; grid-template-rows: repeat(12, 1fr); align-items: center; }
.disable { margin: 11px 0 0 10px; }
label { display: flex; align-items: center; gap: 3px; color: #eee; }
input[type="checkbox"] { appearance: none; width: 8px; height: 8px; border-radius: 2px; background: #585858; }
input[type="checkbox"]:checked { background: #2468e8; }
input[type="checkbox"]:checked::after { content: ""; display: block; width: 3px; height: 5px; margin: 1px 0 0 3px; border: solid #fff; border-width: 0 1px 1px 0; transform: rotate(38deg); }

.center { flex: 1; min-width: 0; display: flex; flex-direction: column; }
.viewport { flex: 1; position: relative; min-height: 0; background: #9ca1a9; }
.drawing { position: absolute; width: 100%; height: 100%; }
.axis { font: 8px Inter, sans-serif; fill: #666c73; }
.view-label { position: absolute; top: 1px; left: 1px; display: flex; gap: 1px; }
.view-label button { height: 11px; padding: 0 2px; background: #1c4f98; color: #fff; font-weight: 700; font-size: 8px; }
.caret { display: block; margin: 0 1px; border: solid transparent; border-width: 3px 3px 0; border-top-color: #fff; }
.view-tabs { height: 17px; padding: 0 0 2px 5px; display: flex; align-items: center; gap: 12px; font-size: 8px; color: #aaa; }
.view-tabs svg { width: 11px; height: 9px; }
.layout { margin-right: -3px; }
.view-tabs i { width: 1px; height: 9px; background: #707070; }
.current { color: #3b82f7; }

.right { width: 159px; padding-left: 2px; display: flex; }
.layers-panel { width: 143px; margin-bottom: 2px; padding: 0 8px 4px 5px; background: #333; display: flex; flex-direction: column; }
.layers-panel h2 { height: 17px; margin-left: -2px; line-height: 13px; }
.layer-tools { height: 28px; margin: 0 4px 0 1px; display: grid; grid-template: 14px 14px / repeat(9, 1fr); align-items: center; justify-items: center; }
.layer-tools svg { width: 11px; height: 11px; }
.search { height: 13px; margin-top: 5px; padding-left: 5px; background: #3d3d3d; gap: 4px; }
.search svg { width: 9px; height: 9px; }
.search input { width: 80px; font-size: 8px; }
.list { flex: 1; margin-top: 3px; background: #1e1e1e; }
table { width: 100%; table-layout: fixed; border-collapse: collapse; }
.c { width: 13px; }
th, td { height: 12px; padding: 0; text-align: left; white-space: nowrap; overflow: hidden; }
th { height: 20px; padding-bottom: 2px; font-weight: 700; color: #fff; border-bottom: 1px solid #2b2b2b; }
th i { display: block; width: 1px; height: 9px; background: #3c3c3c; }
th:first-child, td:first-child { padding-left: 17px; }
td:first-child.parent { padding-left: 8px; }
td:first-child.level1 { padding-left: 25px; }
td:first-child.parent.level1 { padding-left: 16px; }
td:first-child.level2 { padding-left: 33px; }
td svg { width: 9px; height: 9px; margin-left: 2px; }
td.parent svg { display: inline-block; width: 6px; height: 6px; margin: 0 3px 0 0; }
td .tick { width: 12px; height: 11px; margin-left: 0; }
td { border-bottom: 1px solid #262626; color: #eee; }
.selected { background: #464646; }
.swatch { display: block; width: 9px; height: 9px; margin-left: 1px; border: 1px solid #d5d5d5; background: #000; }
.red { background: #c32118; }
.blue { background: #0000f5; }
.green { background: #2d8a1b; }
.purple { background: #7728cd; }
.white { background: #fff; }
.side { flex: 1; display: flex; flex-direction: column; align-items: stretch; background: #333; }
.side button { display: flex; justify-content: center; align-items: center; }
.side .gear { height: 13px; }
.side-active { height: 22px; }
.side-rest { flex: 1; background: #464646; }
.side-rest button { width: 100%; height: 22px; }
.side svg { width: 9px; height: 9px; }

.console { height: 40px; display: grid; grid-template-columns: 14px 1fr; padding-right: 1px; background: #383838; }
.console-tab { writing-mode: vertical-rl; transform: rotate(180deg); font-size: 8px; line-height: 14px; color: #999; }
.log { padding-left: 3px; overflow: hidden; background: #1e1e1e; color: #eee; font: 8px/9px "Liberation Sans", sans-serif; }

.status {
  height: 17px;
  padding-left: 4px;
  display: grid;
  grid-template-columns: 12px 22px 42px 46px 57px 41px 51px 75px 46px 32px 28px 34px 60px 70px 98px 57px 30px 1fr 13px;
  align-items: center;
  justify-items: start;
  background: #353535;
  color: #c4c4c4;
  white-space: nowrap;
}
.status button, .current-layer { display: flex; align-items: center; height: 13px; }
.pane svg { width: 9px; height: 8px; }
.list-toggle svg { width: 11px; height: 9px; }
.current-layer { gap: 3px; }
.large { width: 11px; height: 11px; }
.on { padding: 0 5px; background: #1e1e1e; color: #fff; font-weight: 700; border-radius: 2px; }
.auto { gap: 5px; }
.auto svg { width: 7px; height: 9px; }
.save-time { padding-left: 8px; }
```
